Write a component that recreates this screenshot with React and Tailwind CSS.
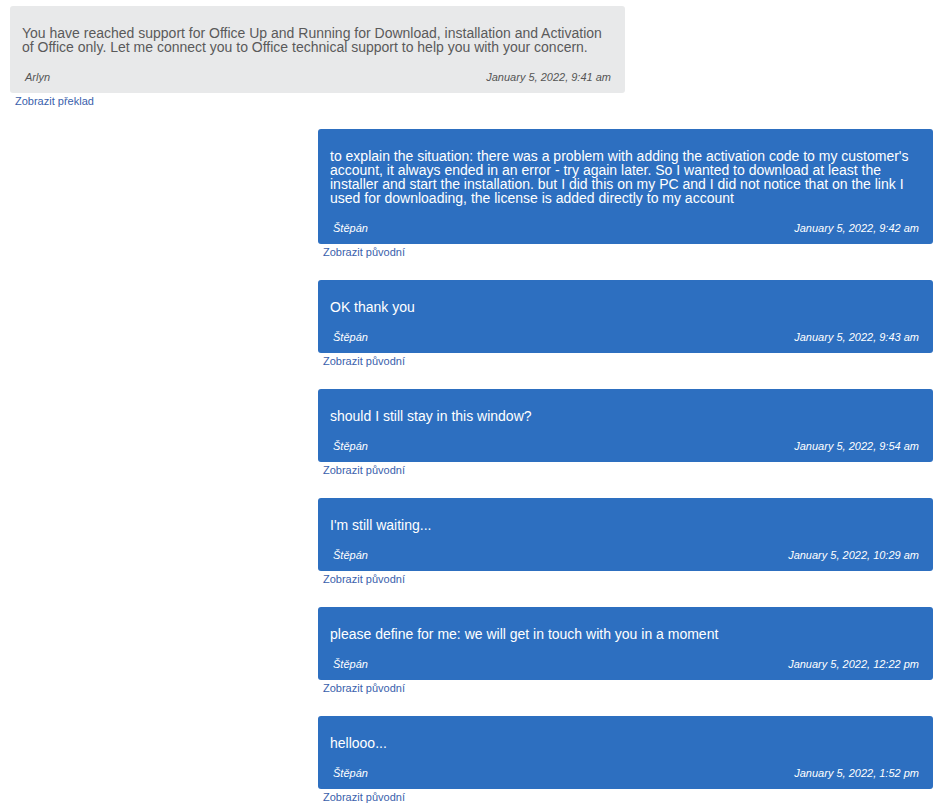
const messages = [
  {
    id: 1,
    author: 'Štěpán',
    time: 'January 5, 2022, 9:42 am',
    text: "to explain the situation: there was a problem with adding the activation code to my customer's account, it always ended in an error - try again later. So I wanted to download at least the installer and start the installation. but I did this on my PC and I did not notice that on the link I used for downloading, the license is added directly to my account",
  },
  { id: 2, author: 'Štěpán', time: 'January 5, 2022, 9:43 am', text: 'OK thank you' },
  { id: 3, author: 'Štěpán', time: 'January 5, 2022, 9:54 am', text: 'should I still stay in this window?' },
  { id: 4, author: 'Štěpán', time: 'January 5, 2022, 10:29 am', text: "I'm still waiting..." },
  { id: 5, author: 'Štěpán', time: 'January 5, 2022, 12:22 pm', text: 'please define for me: we will get in touch with you in a moment' },
  { id: 6, author: 'Štěpán', time: 'January 5, 2022, 1:52 pm', text: 'hellooo...' },
];

function Bubble({ text, author, time, mine }) {
  return (
    <div className={`w-[615px] ${mine ? 'self-end' : 'self-start'} mb-[20px]`}>
      <div
        className={`rounded-[3px] pl-[12px] pr-[11px] pt-[20px] pb-[10px] ${
          mine ? 'bg-[#2d6fc0] text-white' : 'bg-[#e8e9ea] text-[#5a5a5a]'
        }`}
      >
        <p className="text-[14px] leading-[14px]">{text}</p>
        <div className={`flex justify-between mt-[17px] pl-[3px] pr-[3px] text-[11px] leading-[12px] italic ${mine ? 'text-white' : 'text-[#555]'}`}>
          <span>{author}</span>
          <span>{time}</span>
        </div>
      </div>
      <a href="#" className="block pl-[5px] text-[11px] leading-[16px] text-[#3a5fac]">
        {mine ? 'Zobrazit původní' : 'Zobrazit překlad'}
      </a>
    </div>
  );
}

export default function App() {
  return (
    <div className="bg-white min-h-screen pl-[10px] pr-[6px] pt-[6px] font-['Liberation_Sans',Arial,sans-serif]">
      <div className="flex flex-col">
        <Bubble
          author="Arlyn"
          time="January 5, 2022, 9:41 am"
          text="You have reached support for Office Up and Running for Download, installation and Activation of Office only. Let me connect you to Office technical support to help you with your concern."
        />
        {messages.map((m) => (
          <Bubble key={m.id} {...m} mine />
        ))}
      </div>
    </div>
  );
}
